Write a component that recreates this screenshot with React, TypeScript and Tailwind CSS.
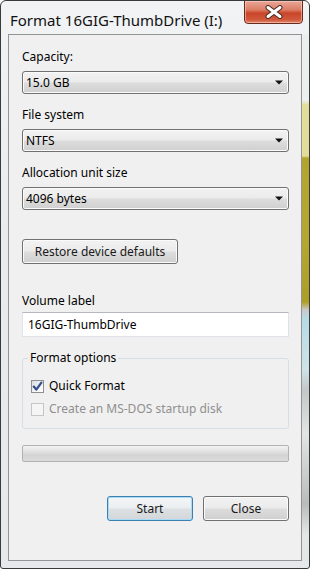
import React from "react";

const GRAD = "bg-[linear-gradient(to_bottom,#f2f2f2_0%,#ebebeb_48%,#dddddd_52%,#cfcfcf_100%)]";

function Dropdown({ value }: { value: string }) {
  return (
    <div className={`h-[23px] rounded-[3px] border border-[#707070] ${GRAD} shadow-[inset_0_0_0_1px_#fbfbfb] flex items-center justify-between pl-[3px] pr-[5px]`}>
      <span className="leading-[16px]">{value}</span>
      <svg width="8" height="5" viewBox="0 0 8 5">
        <path d="M0 0.5h8L4 4.5z" fill="#111" />
      </svg>
    </div>
  );
}

function Field({ label, value, first }: { label: string; value: string; first?: boolean }) {
  return (
    <div className={first ? "" : "mt-[13px]"}>
      <div className="h-[16px] leading-[16px]">{label}</div>
      <div className="mt-[6px]">
        <Dropdown value={value} />
      </div>
    </div>
  );
}

function Button({ children, className = "", primary }: { children: React.ReactNode; className?: string; primary?: boolean }) {
  return (
    <button
      className={`h-[25px] rounded-[3px] border ${
        primary
          ? "border-[#3c7fb1] shadow-[inset_0_0_0_1px_#a8dcf6] bg-[linear-gradient(to_bottom,#f4f6f8_0%,#ebeef0_48%,#dde1e4_52%,#d2d6d9_100%)]"
          : `border-[#707070] shadow-[inset_0_0_0_1px_#fbfbfb] ${GRAD}`
      } flex items-center justify-center text-[#1a1a1a] ${className}`}
    >
      {children}
    </button>
  );
}

function CheckRow({ label, checked, disabled }: { label: string; checked?: boolean; disabled?: boolean }) {
  return (
    <div className="h-[16px] flex items-center">
      <div
        className={`w-[13px] h-[13px] border flex items-center justify-center ${
          disabled
            ? "border-[#c6c6c6] bg-[#f5f5f5]"
            : "border-[#8e8f8f] bg-[linear-gradient(135deg,#d9dbe0_0%,#f4f5f7_60%,#ffffff_100%)]"
        }`}
      >
        {checked && (
          <svg width="11" height="11" viewBox="0 0 11 11">
            <path d="M1.8 5.6L4.3 8.6L9.4 1.6" fill="none" stroke="#35508a" strokeWidth="2.3" strokeLinecap="round" strokeLinejoin="round" />
          </svg>
        )}
      </div>
      <span className={`ml-[5px] leading-[16px] ${disabled ? "text-[#8f8f8f]" : ""}`}>{label}</span>
    </div>
  );
}

export default function App() {
  return (
    <div className="w-[310px] h-[569px] font-['Noto_Sans',sans-serif] text-[12px] text-black">
      <div className="w-full h-full flex flex-col rounded-t-[6px] rounded-b-[3px] border border-[#3a3a3a] bg-[linear-gradient(to_bottom,#f1f3f5_0%,#e9ecee_40%,#e6e9eb_100%)] overflow-hidden">
        {/* title bar */}
        <div className="h-[33px] flex items-start justify-between shrink-0">
          <div className="pl-[9px] pt-[9px] text-[15px] leading-[20px] text-[#111]">Format 16GIG-ThumbDrive (I:)</div>
          <div className="mr-[6px] w-[59px] h-[24px] -mt-[1px] rounded-b-[4px] border border-[#6b2a1c] bg-[linear-gradient(to_bottom,#e9a899_0%,#dc7d66_40%,#c9452a_55%,#d2593c_85%,#e08a6c_100%)] shadow-[inset_0_0_0_1px_rgba(255,220,210,0.5)] flex items-center justify-center">
            <svg width="20" height="14" viewBox="0 0 20 14">
              <path d="M4 2.5L16 11.5M16 2.5L4 11.5" stroke="#4a2a22" strokeWidth="5" strokeLinecap="round" />
              <path d="M4 2.5L16 11.5M16 2.5L4 11.5" stroke="#ffffff" strokeWidth="3" strokeLinecap="round" />
            </svg>
          </div>
        </div>

        {/* body row */}
        <div className="flex flex-1 min-h-0">
          <div className="w-[7px] shrink-0" />
          <div className="w-[294px] shrink-0 border border-[#939393] bg-[#f0f0f0] pl-[13px] pr-[12px] pt-[14px] flex flex-col">
            <Field first label="Capacity:" value="15.0 GB" />
            <Field label="File system" value="NTFS" />
            <Field label="Allocation unit size" value="4096 bytes" />

            <Button className="mt-[29px] w-[156px]">Restore device defaults</Button>

            <div className="mt-[29px] h-[16px] leading-[16px]">Volume label</div>
            <div className="mt-[3px] h-[25px] bg-white border border-[#dfe3e8] border-t-[#b5b9bf] flex items-center pl-[5px]">
              16GIG-ThumbDrive
            </div>

            <fieldset className="mt-[13px] border border-[#d5dfe5] rounded-[3px] pl-[5px] pb-[11px]">
              <legend className="px-[2px] leading-[16px]">Format options</legend>
              <div className="pl-[3px] mt-[12px] flex flex-col gap-[7px]">
                <CheckRow checked label="Quick Format" />
                <CheckRow disabled label="Create an MS-DOS startup disk" />
              </div>
            </fieldset>

            <div className="mt-[16px] h-[17px] rounded-[2px] border border-[#b2b2b2] bg-[linear-gradient(to_bottom,#f3f3f3_0%,#e2e2e2_35%,#d3d3d3_60%,#dcdcdc_100%)]" />

            <div className="mt-[34px] flex justify-end gap-[10px]">
              <Button primary className="w-[86px]">Start</Button>
              <Button className="w-[86px]">Close</Button>
            </div>
          </div>
          <div className="w-[7px] shrink-0 bg-[linear-gradient(to_bottom,#eceef0_0px,#eceef0_66px,#e3dd9c_71px,#e3dd9c_122px,#b2a52d_124px,#b5a830_200px,#ad9f26_268px,#c9c9c9_276px,#b6dbe4_284px,#cde3e8_336px,#c4c6c7_356px,#e2e4e6_400px,#b9bbbc_470px,#e4e6e8_500px)]" />
        </div>
        <div className="h-[7px] shrink-0" />
      </div>
    </div>
  );
}
